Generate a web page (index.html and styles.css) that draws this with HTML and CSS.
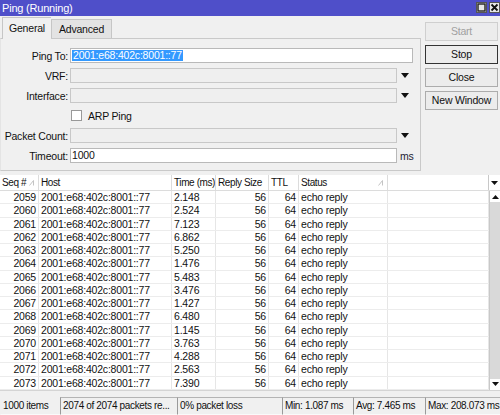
FILE: index.html
```html
<!DOCTYPE html>
<html lang="en">
<head>
  <meta charset="UTF-8">
  <title>Ping (Running)</title>
  <link rel="stylesheet" href="styles.css">
</head>
<body>
  <div class="titlebar">
    <span class="title">Ping (Running)</span>
    <div class="wbtns">
      <span class="wbtn"><svg width="9" height="9" viewBox="0 0 9 9"><rect x="1" y="1" width="7" height="7" fill="none" stroke="#222" stroke-width="1.4"/></svg></span>
      <span class="wbtn"><svg width="9" height="9" viewBox="0 0 9 9"><path d="M1.5 1.5 L7.5 7.5 M7.5 1.5 L1.5 7.5" stroke="#111" stroke-width="1.8"/></svg></span>
    </div>
  </div>

  <div class="top">
    <div class="left">
      <div class="tabs">
        <div class="tab active">General</div>
        <div class="tab">Advanced</div>
      </div>
      <div class="panel">
        <div class="row">
          <label>Ping To:</label>
          <div class="field white full"><span class="sel">2001:e68:402c:8001::77</span></div>
        </div>
        <div class="row">
          <label>VRF:</label>
          <div class="field"></div>
          <span class="drop"><svg width="8" height="5" viewBox="0 0 8 5"><polygon points="0,0 8,0 4,5" fill="#111"/></svg></span>
        </div>
        <div class="row">
          <label>Interface:</label>
          <div class="field"></div>
          <span class="drop"><svg width="8" height="5" viewBox="0 0 8 5"><polygon points="0,0 8,0 4,5" fill="#111"/></svg></span>
        </div>
        <div class="row">
          <label></label>
          <span class="check"></span>
          <span class="check-label">ARP Ping</span>
        </div>
        <div class="row">
          <label>Packet Count:</label>
          <div class="field"></div>
          <span class="drop"><svg width="8" height="5" viewBox="0 0 8 5"><polygon points="0,0 8,0 4,5" fill="#111"/></svg></span>
        </div>
        <div class="row">
          <label>Timeout:</label>
          <div class="field white">1000</div>
          <span class="unit">ms</span>
        </div>
      </div>
    </div>
    <div class="buttons">
      <div class="btn disabled">Start</div>
      <div class="btn default">Stop</div>
      <div class="btn">Close</div>
      <div class="btn">New Window</div>
    </div>
  </div>

  <div class="table">
    <div class="thead">
      <div class="th">Seq #<svg class="sort" width="5" height="6" viewBox="0 0 5 6"><path d="M0.5 5.5 L4.5 0.5 L4.5 5.5" fill="none" stroke="#c4c4c4"/></svg></div>
      <div class="th">Host</div>
      <div class="th">Time (ms)</div>
      <div class="th">Reply Size</div>
      <div class="th">TTL</div>
      <div class="th">Status<svg class="sort" width="5" height="6" viewBox="0 0 5 6"><path d="M0.5 5.5 L4.5 0.5 L4.5 5.5" fill="none" stroke="#c4c4c4"/></svg></div>
      <div class="th"></div>
      <div class="th menu"><svg width="7" height="4" viewBox="0 0 7 4"><polygon points="0,0 7,0 3.5,4" fill="#111"/></svg></div>
    </div>
    <div class="tbody">
      <div class="rows" id="rows"></div>
      <div class="scroll">
        <div class="sarrow"><svg width="7" height="4" viewBox="0 0 7 4"><polygon points="0,4 7,4 3.5,0" fill="#111"/></svg></div>
        <div class="track"></div>
        <div class="sarrow"><svg width="7" height="4" viewBox="0 0 7 4"><polygon points="0,0 7,0 3.5,4" fill="#111"/></svg></div>
      </div>
    </div>
  </div>

  <div class="status">
    <div class="sbox w1">1000 items</div>
    <div class="sbox w2">2074 of 2074 packets re...</div>
    <div class="sbox w3">0% packet loss</div>
    <div class="sbox w4">Min: 1.087 ms</div>
    <div class="sbox w5">Avg: 7.465 ms</div>
    <div class="sbox w6">Max: 208.073 ms</div>
  </div>

  <script>
    const times = ['2.148', '2.524', '7.123', '6.862', '5.250', '1.476', '5.483', '3.476',
                   '1.427', '6.480', '1.145', '3.763', '4.288', '2.563', '7.390'];
    const rows = document.getElementById('rows');
    times.forEach(function (t, i) {
      const row = document.createElement('div');
      row.className = 'tr';
      row.innerHTML =
        '<div class="td num">' + (2059 + i) + '</div>' +
        '<div class="td">2001:e68:402c:8001::77</div>' +
        '<div class="td">' + t + '</div>' +
        '<div class="td num">56</div>' +
        '<div class="td num">64</div>' +
        '<div class="td">echo reply</div>' +
        '<div class="td"></div>';
      rows.appendChild(row);
    });
  </script>
</body>
</html>
```

FILE: styles.css
```css
* {
  box-sizing: border-box;
}

html, body {
  margin: 0;
  width: 500px;
  height: 415px;
  overflow: hidden;
}

body {
  font-family: 'Liberation Sans', Arial, sans-serif;
  font-size: 10.5px;
  letter-spacing: -0.2px;
  color: #111;
  background: #f0f0f0;
}

/* title bar */
.titlebar {
  height: 16px;
  background: #4f4fc9;
  display: flex;
  align-items: center;
  justify-content: space-between;
  padding-left: 2px;
}

.title {
  color: #fff;
  font-size: 11px;
}

.wbtns {
  display: flex;
  gap: 2px;
  align-self: flex-start;
  padding-top: 2px;
}

.wbtn {
  width: 11px;
  height: 11px;
  background: #e8e8e8;
  border: 1px solid #555;
  display: flex;
  align-items: center;
  justify-content: center;
}

/* top area */
.top {
  display: flex;
  height: 155px;
}

.left {
  width: 421px;
  display: flex;
  flex-direction: column;
}

.tabs {
  display: flex;
  align-items: flex-end;
  height: 23px;
  padding-left: 2px;
  position: relative;
  z-index: 1;
}

.tab {
  height: 19px;
  padding: 0 7px;
  line-height: 18px;
  background: #e3e3e3;
  border: 1px solid #c6c6c6;
  border-bottom: none;
  margin-bottom: 1px;
}

.tab.active {
  height: 22px;
  padding: 0 6px;
  background: #f0f0f0;
  line-height: 20px;
  margin-bottom: 0;
  border-right: none;
}

.panel {
  margin-top: -1px;
  height: 133px;
  border: 1px solid #c9c9c9;
  border-left-color: #e4e4e4;
  padding-top: 9px;
  display: flex;
  flex-direction: column;
  gap: 5px;
}

.row {
  display: flex;
  align-items: center;
  height: 15px;
}

.row label {
  width: 67px;
  margin-right: 2px;
  text-align: right;
}

.field {
  width: 327px;
  height: 15px;
  border: 1px solid #c8c8c8;
  background: #efefef;
  padding-left: 1px;
  line-height: 13px;
}

.field.white {
  background: #fff;
  border-color: #b9b9b9;
}

.field.full {
  width: 343px;
}

.sel {
  background: #3399ff;
  color: #fff;
  padding: 0 1px;
  display: inline-block;
  height: 11px;
  line-height: 11px;
  margin-top: 1px;
}

.drop {
  width: 16px;
  display: flex;
  justify-content: center;
}

.unit {
  margin-left: 3px;
  color: #223;
}

.check {
  width: 11px;
  height: 11px;
  border: 1px solid #999;
  background: #fff;
  margin-left: 1px;
}

.check-label {
  margin-left: 6px;
}

/* right buttons */
.buttons {
  margin-left: 4px;
  padding-top: 6px;
  display: flex;
  flex-direction: column;
  gap: 4px;
}

.btn {
  width: 73px;
  height: 19px;
  border: 1px solid #acacac;
  background: #ececec;
  text-align: center;
  line-height: 17px;
}

.btn.disabled {
  color: #a0a0a0;
  border-color: #cfcfcf;
}

.btn.default {
  border-color: #333;
}

/* table */
.table {
  margin-top: 4px;
  background: #fff;
}

.thead,
.tr {
  display: grid;
  grid-template-columns: 39px 133px 44px 53px 30px 89px 101px 11px;
}

.tr {
  grid-template-columns: 39px 133px 44px 53px 30px 89px 101px;
}

.thead {
  height: 16px;
  border-bottom: 1px solid #dcdcdc;
}

.th {
  border-right: 1px solid #dcdcdc;
  padding-left: 2px;
  line-height: 15px;
  position: relative;
  white-space: nowrap;
  overflow: hidden;
  font-size: 10px;
  letter-spacing: -0.4px;
}

.th .sort {
  position: absolute;
  right: 4px;
  top: 5px;
}

.th.menu {
  border-right: none;
  border-left: 1px solid #c8c8c8;
  padding: 0;
  display: flex;
  align-items: center;
  justify-content: center;
  margin-left: -1px;
}

.tbody {
  display: flex;
}

.rows {
  width: 489px;
}

.tr {
  height: 13.25px;
  border-bottom: 1px solid #ececec;
}

.td {
  border-right: 1px solid #e6e6e6;
  padding: 0 2px;
  line-height: 12px;
  white-space: nowrap;
  overflow: hidden;
}

.td.num {
  text-align: right;
  padding-right: 2px;
}

.scroll {
  width: 11px;
  border-left: 1px solid #c8c8c8;
  display: flex;
  flex-direction: column;
  background: #fff;
}

.sarrow {
  height: 11px;
  display: flex;
  align-items: center;
  justify-content: center;
}

.track {
  flex: 1;
  background: #d9d9d9;
}

/* status bar */
.status {
  display: flex;
  padding-top: 6px;
  border-top: 1px solid #d4d4d4;
}

.sbox {
  height: 18px;
  line-height: 16px;
  padding-left: 2px;
  border-top: 1px solid #b4b4b4;
  border-left: 1px solid #9a9a9a;
  border-bottom: 1px solid #fafafa;
  white-space: nowrap;
  overflow: hidden;
  font-size: 10px;
  letter-spacing: -0.35px;
}

.w1 { width: 60px; border-left-color: #f0f0f0; border-top-color: #f0f0f0; }
.w2 { width: 117px; }
.w3 { width: 105px; }
.w4 { width: 71px; }
.w5 { width: 72px; }
.w6 { width: 75px; }
```
